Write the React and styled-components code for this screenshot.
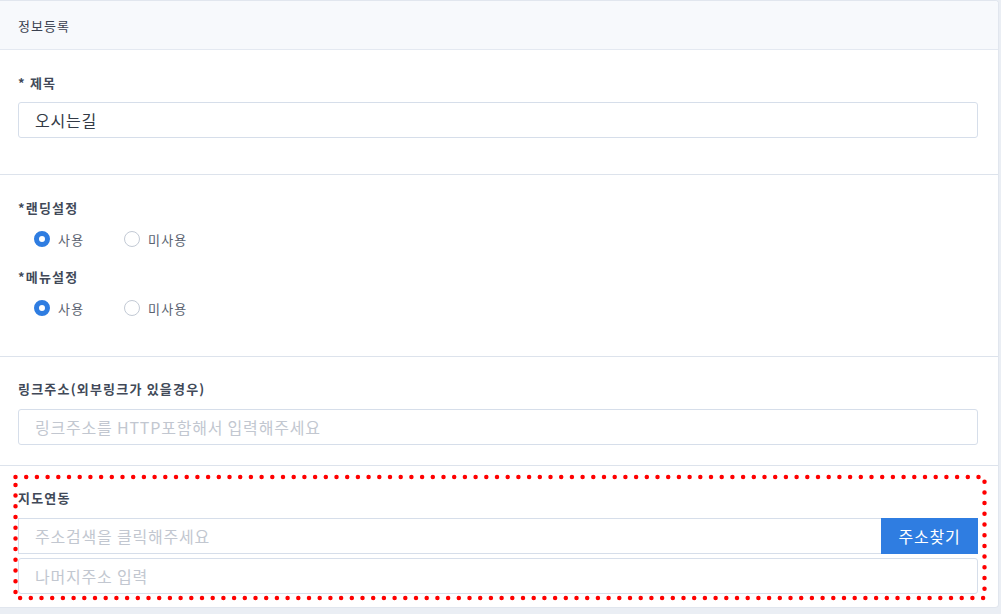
import React from "react";
import styled, { createGlobalStyle } from "styled-components";

const GlobalStyle = createGlobalStyle`
  html, body {
    margin: 0;
    padding: 0;
    background: #eaeef4;
    font-family: "Noto Sans CJK KR", "Noto Sans", sans-serif;
  }
  * { box-sizing: border-box; }
`;

const Card = styled.div`
  width: 999px;
  background: #fff;
  border: 1px solid #e1e6ee;
  border-left: none;
  border-radius: 0 4px 4px 0;
  overflow: hidden;
`;

const CardHeader = styled.div`
  height: 49px;
  display: flex;
  align-items: center;
  padding-left: 18px;
  background: #f7f9fc;
  border-bottom: 1px solid #e4e9f1;
  font-size: 13px;
  letter-spacing: 1px;
  color: #3a4150;
`;

const Section = styled.div`
  position: relative;
  display: flex;
  flex-direction: column;
  padding: ${(p) => p.$pad || "24px 20px 36px 18px"};
  border-bottom: ${(p) => (p.$last ? "none" : "1px solid #dde3ec")};
`;

const Label = styled.div`
  font-size: 13px;
  line-height: 18px;
  font-weight: 700;
  letter-spacing: 1.2px;
  color: #414958;
  margin-top: ${(p) => p.$top || 0}px;
`;

const Input = styled.input`
  height: 36px;
  width: 100%;
  margin-top: ${(p) => p.$top ?? 11}px;
  padding: 0 16px;
  border: 1px solid #d6deea;
  border-radius: 3px;
  font-family: inherit;
  font-size: 16px;
  letter-spacing: 0.8px;
  color: #333a46;
  outline: none;
  &::placeholder {
    color: #c2c7d0;
  }
`;

const RadioRow = styled.div`
  display: flex;
  align-items: center;
  height: 22px;
  margin-top: 11px;
  padding-left: 16px;
`;

const Option = styled.label`
  display: flex;
  align-items: center;
  gap: 8px;
  width: 90px;
  font-size: 13px;
  letter-spacing: 1.2px;
  color: #5a6270;
`;

const Dot = styled.span`
  width: 16px;
  height: 16px;
  border-radius: 50%;
  background: #fff;
  border: ${(p) => (p.$on ? "5px solid #2f7de1" : "1px solid #c3cad5")};
`;

const AddressRow = styled.div`
  display: flex;
  margin-top: 11px;
  height: 36px;
`;

const AddressInput = styled(Input)`
  margin-top: 0;
  flex: 1;
  border-radius: 0;
  border-right: none;
`;

const SearchButton = styled.button`
  width: 97px;
  height: 36px;
  border: none;
  background: #2f7de1;
  color: #fff;
  font-family: inherit;
  font-size: 16px;
  letter-spacing: 0.8px;
`;

const Marker = styled.svg`
  position: absolute;
  left: 0;
  top: 0;
  pointer-events: none;
  overflow: visible;
`;

function RadioGroup({ value }) {
  return (
    <RadioRow>
      <Option>
        <Dot $on={value === "use"} />
        사용
      </Option>
      <Option>
        <Dot $on={value === "none"} />
        미사용
      </Option>
    </RadioRow>
  );
}

export default function App() {
  return (
    <>
      <GlobalStyle />
      <Card>
        <CardHeader>정보등록</CardHeader>

        <Section>
          <Label>* 제목</Label>
          <Input $top={10} defaultValue="오시는길" />
        </Section>

        <Section $pad="24px 20px 37px 18px">
          <Label>*랜딩설정</Label>
          <RadioGroup value="use" />
          <Label $top={18}>*메뉴설정</Label>
          <RadioGroup value="use" />
        </Section>

        <Section $pad="23px 20px 20px 18px">
          <Label>링크주소(외부링크가 있을경우)</Label>
          <Input placeholder="링크주소를 HTTP포함해서 입력해주세요" />
        </Section>

        <Section $pad="23px 20px 13px 18px" $last>
          <Label>지도연동</Label>
          <AddressRow>
            <AddressInput placeholder="주소검색을 클릭해주세요" />
            <SearchButton>주소찾기</SearchButton>
          </AddressRow>
          <Input $top={4} placeholder="나머지주소 입력" />
          <Marker width="999" height="140">
            <rect
              x="15.5"
              y="11"
              width="969"
              height="121"
              fill="none"
              stroke="#f00"
              strokeWidth="4.5"
              strokeLinecap="round"
              strokeDasharray="0 10.7"
            />
          </Marker>
        </Section>
      </Card>
    </>
  );
}
